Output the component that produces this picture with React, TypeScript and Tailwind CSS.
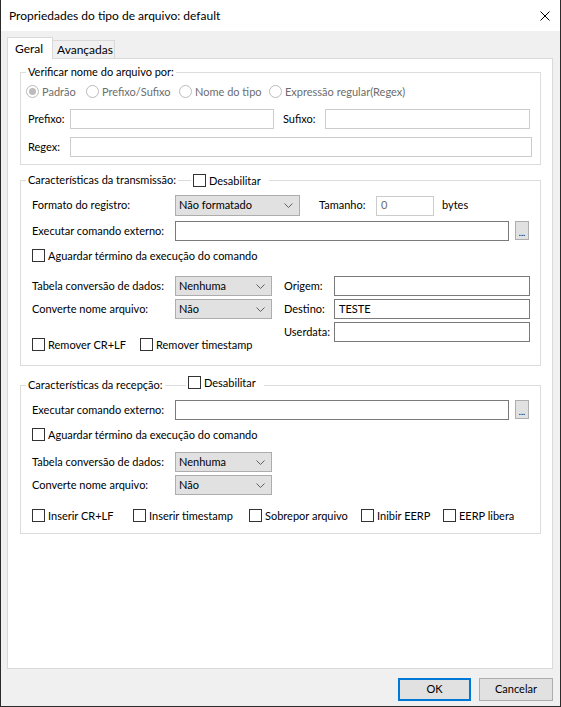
import React from 'react';

function Check({ label, className = '' }: { label?: string; className?: string }) {
  return (
    <div className={`flex items-center h-[13px] ${className}`}>
      <span className="w-[13px] h-[13px] border border-[#333333] bg-white shrink-0" />
      {label && <span className="ml-[3px] whitespace-nowrap leading-[13px]">{label}</span>}
    </div>
  );
}

function Radio({ label, checked, className = '' }: { label: string; checked?: boolean; className?: string }) {
  return (
    <div className={`flex items-center h-[13px] ${className}`}>
      <span className="w-[13px] h-[13px] rounded-full border border-[#bcbcbc] bg-white flex items-center justify-center shrink-0">
        {checked && <span className="w-[7px] h-[7px] rounded-full bg-[#bcbcbc]" />}
      </span>
      <span className="ml-[3px] whitespace-nowrap text-[#6d6d6d] leading-[13px]">{label}</span>
    </div>
  );
}

function TextBox({ className = '', value, light }: { className?: string; value?: string; light?: boolean }) {
  return (
    <div
      className={`h-[20px] bg-white border flex items-center pl-[4px] shrink-0 ${
        light ? 'border-[#cccccc]' : 'border-[#7a7a7a]'
      } ${className}`}
    >
      {value}
    </div>
  );
}

function Combo({ className = '', value }: { className?: string; value: string }) {
  return (
    <div
      className={`h-[20px] bg-[#e1e1e1] border border-[#adadad] flex items-center justify-between pl-[3px] pr-[6px] shrink-0 ${className}`}
    >
      <span>{value}</span>
      <svg width="9" height="5" viewBox="0 0 9 5">
        <path d="M0.5 0.5L4.5 4.5L8.5 0.5" fill="none" stroke="#606060" strokeWidth="1" />
      </svg>
    </div>
  );
}

function DotsButton() {
  return (
    <div className="ml-[6px] w-[14px] h-[19px] bg-[#e1e1e1] border border-[#adadad] flex items-end justify-center self-start shrink-0">
      <span className="text-[9px] leading-[12px]">...</span>
    </div>
  );
}

function Legend({ text }: { text: string }) {
  return (
    <span className="absolute left-[5px] top-[-8px] h-[14px] leading-[14px] px-[2px] bg-white whitespace-nowrap">
      {text}
    </span>
  );
}

export default function App() {
  return (
    <div className="w-[561px] h-[707px] bg-[#f0f0f0] border-x border-b border-[#2b2b2b] flex flex-col text-[11px] text-black font-['Lato','Liberation_Sans',sans-serif]">
      {/* title bar */}
      <div className="h-[31px] bg-white flex items-center justify-between pl-[8px] pr-[10px] shrink-0">
        <span className="text-[12px]">Propriedades do tipo de arquivo: default</span>
        <svg width="10" height="10" viewBox="0 0 10 10">
          <path d="M0.5 0.5L9.5 9.5M9.5 0.5L0.5 9.5" stroke="#000" strokeWidth="1" />
        </svg>
      </div>

      <div className="pl-[6px] flex flex-col">
        {/* tabs */}
        <div className="flex items-end h-[21px] mt-[6px]">
          <div className="relative z-10 -mb-px w-[46px] h-[22px] bg-white border-t border-x border-[#d9d9d9] pl-[7px] flex items-center text-[12px]">
            Geral
          </div>
          <div className="w-[62px] h-[18px] bg-[#f0f0f0] border-t border-r border-[#d9d9d9] pl-[4px] flex items-center text-[12px]">
            Avançadas
          </div>
        </div>

        {/* tab panel */}
        <div className="w-[546px] h-[611px] bg-white border border-[#d9d9d9] flex flex-col pl-[12px] pt-[13px]">
          {/* group 1 */}
          <div className="relative w-[521px] h-[93px] border border-[#dcdcdc] flex flex-col">
            <Legend text="Verificar nome do arquivo por:" />
            <div className="flex items-center mt-[12px] pl-[5px]">
              <Radio label="Padrão" checked className="w-[60px]" />
              <Radio label="Prefixo/Sufixo" className="w-[93px]" />
              <Radio label="Nome do tipo" className="w-[90px]" />
              <Radio label="Expressão regular(Regex)" />
            </div>
            <div className="flex items-center mt-[11px] pl-[7px]">
              <span className="w-[42px]">Prefixo:</span>
              <TextBox light className="w-[204px]" />
              <span className="ml-[9px] w-[42px]">Sufixo:</span>
              <TextBox light className="w-[205px]" />
            </div>
            <div className="flex items-center mt-[8px] pl-[7px]">
              <span className="w-[42px]">Regex:</span>
              <TextBox light className="w-[462px]" />
            </div>
          </div>

          {/* group 2 */}
          <div className="relative w-[521px] h-[186px] mt-[15px] border border-[#dcdcdc] flex flex-col pl-[11px]">
            <Legend text="Características da transmissão:" />
            <div className="absolute left-[170px] top-[-7px] bg-white pl-[2px] pr-[8px]">
              <Check label="Desabilitar" />
            </div>

            <div className="flex items-center mt-[14px]">
              <span className="w-[143px]">Formato do registro:</span>
              <Combo value="Não formatado" className="w-[125px] h-[21px]" />
              <span className="ml-[19px] w-[57px]">Tamanho:</span>
              <TextBox light value="0" className="w-[58px] text-[#6d6d6d]" />
              <span className="ml-[8px]">bytes</span>
            </div>

            <div className="flex items-center mt-[5px]">
              <span className="w-[143px]">Executar comando externo:</span>
              <TextBox className="w-[334px]" />
              <DotsButton />
            </div>

            <Check label="Aguardar término da execução do comando" className="mt-[8px]" />

            <div className="flex mt-[14px]">
              <div className="w-[240px] flex flex-col">
                <div className="flex items-center">
                  <span className="w-[143px]">Tabela conversão de dados:</span>
                  <Combo value="Nenhuma" className="w-[97px]" />
                </div>
                <div className="flex items-center mt-[3px]">
                  <span className="w-[143px]">Converte nome arquivo:</span>
                  <Combo value="Não" className="w-[97px]" />
                </div>
                <div className="flex items-center mt-[19px]">
                  <Check label="Remover CR+LF" className="w-[108px]" />
                  <Check label="Remover timestamp" />
                </div>
              </div>
              <div className="ml-[12px] flex flex-col gap-[3px]">
                <div className="flex items-center">
                  <span className="w-[50px]">Origem:</span>
                  <TextBox className="w-[196px]" />
                </div>
                <div className="flex items-center">
                  <span className="w-[50px]">Destino:</span>
                  <TextBox value="TESTE" className="w-[196px]" />
                </div>
                <div className="flex items-center">
                  <span className="w-[50px]">Userdata:</span>
                  <TextBox className="w-[196px]" />
                </div>
              </div>
            </div>
          </div>

          {/* group 3 */}
          <div className="relative w-[521px] h-[149px] mt-[19px] border border-[#dcdcdc] flex flex-col pl-[11px]">
            <Legend text="Características da recepção:" />
            <div className="absolute left-[165px] top-[-10px] bg-white pl-[2px] pr-[8px]">
              <Check label="Desabilitar" />
            </div>

            <div className="flex items-center mt-[14px]">
              <span className="w-[143px]">Executar comando externo:</span>
              <TextBox className="w-[334px]" />
              <DotsButton />
            </div>

            <Check label="Aguardar término da execução do comando" className="mt-[8px]" />

            <div className="flex items-center mt-[11px]">
              <span className="w-[143px]">Tabela conversão de dados:</span>
              <Combo value="Nenhuma" className="w-[97px]" />
            </div>
            <div className="flex items-center mt-[3px]">
              <span className="w-[143px]">Converte nome arquivo:</span>
              <Combo value="Não" className="w-[97px]" />
            </div>

            <div className="flex items-center mt-[14px]">
              <Check label="Inserir CR+LF" className="w-[101px]" />
              <Check label="Inserir timestamp" className="w-[116px]" />
              <Check label="Sobrepor arquivo" className="w-[112px]" />
              <Check label="Inibir EERP" className="w-[82px]" />
              <Check label="EERP libera" />
            </div>
          </div>
        </div>

        {/* buttons */}
        <div className="flex justify-end gap-[8px] mt-[9px] pr-[7px]">
          <div className="w-[73px] h-[23px] bg-[#e1e1e1] border-2 border-[#0078d7] flex items-center justify-center">
            OK
          </div>
          <div className="w-[74px] h-[23px] bg-[#e1e1e1] border border-[#adadad] flex items-center justify-center">
            Cancelar
          </div>
        </div>
      </div>
    </div>
  );
}
